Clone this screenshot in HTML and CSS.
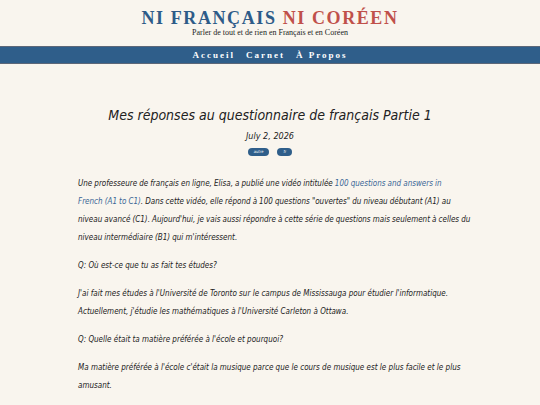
FILE: index.html
```html
<!DOCTYPE html>
<html lang="fr">
<head>
<meta charset="utf-8">
<title>Ni Français Ni Coréen</title>
<link rel="stylesheet" href="styles.css">
</head>
<body>
<header class="site-header">
  <h1 class="site-title"><span class="blue">NI FRANÇAIS</span> <span class="red">NI CORÉEN</span></h1>
  <p class="site-sub">Parler de tout et de rien en Français et en Coréen</p>
</header>
<nav class="nav">
  <a href="#">Accueil</a>
  <a href="#">Carnet</a>
  <a href="#">À Propos</a>
</nav>
<main class="post">
  <h2 class="post-title">Mes réponses au questionnaire de français Partie 1</h2>
  <p class="post-date">July 2, 2026</p>
  <div class="tags"><span class="tag">autre</span><span class="tag">fr</span></div>
  <div class="content">
    <p class="intro">Une professeure de français en ligne, Elisa, a publié une vidéo intitulée <a href="#">100 questions and answers in<br>French (A1 to C1)</a>. Dans cette vidéo, elle répond à 100 questions "ouvertes" du niveau débutant (A1) au<br>niveau avancé (C1). Aujourd'hui, je vais aussi répondre à cette série de questions mais seulement à celles du<br>niveau intermédiaire (B1) qui m'intéressent.</p>
    <p>Q: Où est-ce que tu as fait tes études?</p>
    <p>J'ai fait mes études à l'Université de Toronto sur le campus de Mississauga pour étudier l'informatique. Actuellement, j'étudie les mathématiques à l'Université Carleton à Ottawa.</p>
    <p>Q: Quelle était ta matière préférée à l'école et pourquoi?</p>
    <p>Ma matière préférée à l'école c'était la musique parce que le cours de musique est le plus facile et le plus amusant.</p>
  </div>
</main>
</body>
</html>
```
FILE: styles.css
```css
html, body {
  margin: 0;
  padding: 0;
  background: #f9f5ee;
}
body {
  color: #222;
}
.site-header {
  text-align: center;
  padding-top: 8px;
  height: 38px;
}
.site-title {
  margin: 0;
  font-family: "Liberation Serif", serif;
  font-weight: bold;
  font-size: 18px;
  letter-spacing: 1.6px;
  line-height: 20px;
}
.blue { color: #2e5b88; }
.red { color: #c0504a; }
.site-sub {
  margin: 0;
  font-family: "Liberation Serif", serif;
  font-size: 8px;
  line-height: 10px;
  color: #222;
}
.nav {
  background: #2f5e8a;
  border-top: 1px solid #5d6778;
  border-bottom: 1px solid #5d6778;
  height: 16px;
  display: flex;
  justify-content: center;
  align-items: center;
  gap: 11px;
}
.nav a {
  color: #fff;
  text-decoration: none;
  font-family: "Liberation Serif", serif;
  font-weight: bold;
  font-size: 9px;
  letter-spacing: 2px;
}
.post {
  width: 384px;
  margin: 0 auto;
  padding-top: 41px;
  font-family: "DejaVu Sans Condensed", sans-serif;
  font-style: oblique;
}
.post-title {
  margin: 0;
  text-align: center;
  font-size: 14px;
  line-height: 20px;
  font-weight: normal;
  color: #222;
}
.post-date {
  margin: 5px 0 0;
  text-align: center;
  font-size: 9px;
  line-height: 12px;
}
.tags {
  display: flex;
  justify-content: center;
  gap: 8px;
  margin-top: 6px;
}
.tag {
  background: #2f5e8a;
  color: #fff;
  font-size: 4px;
  line-height: 8px;
  height: 8px;
  padding: 0 6px;
  border-radius: 5px;
}
.content {
  margin-top: 19px;
  margin-right: -10px;
  font-size: 8px;
  line-height: 18px;
}
.content p {
  margin: 0 0 10px;
}
.content .intro {
  word-spacing: -0.2px;
}
.content a {
  color: #3a6796;
  text-decoration: none;
}
```
